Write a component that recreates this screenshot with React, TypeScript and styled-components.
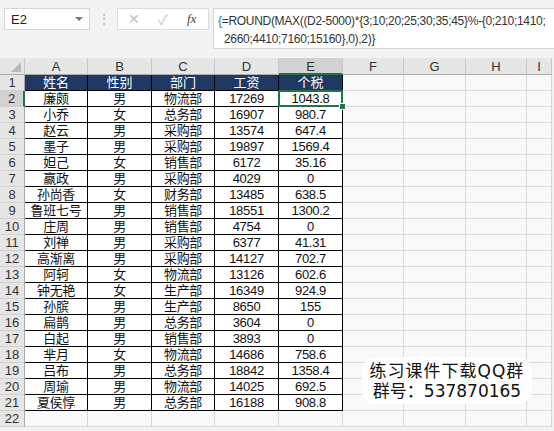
import styled, { createGlobalStyle } from "styled-components";

const GlobalStyle = createGlobalStyle`
  body {
    margin: 0;
    background: #f3f3f3;
  }
`;

const COLUMNS = ["A", "B", "C", "D", "E", "F", "G", "H", "I"];
const WIDTHS = [63, 64, 63, 64, 64, 61, 62, 61, 25];

const rows = [
  ["姓名", "性别", "部门", "工资", "个税"],
  ["廉颇", "男", "物流部", "17269", "1043.8"],
  ["小乔", "女", "总务部", "16907", "980.7"],
  ["赵云", "男", "采购部", "13574", "647.4"],
  ["墨子", "男", "采购部", "19897", "1569.4"],
  ["妲己", "女", "销售部", "6172", "35.16"],
  ["嬴政", "男", "采购部", "4029", "0"],
  ["孙尚香", "女", "财务部", "13485", "638.5"],
  ["鲁班七号", "男", "销售部", "18551", "1300.2"],
  ["庄周", "男", "销售部", "4754", "0"],
  ["刘禅", "男", "采购部", "6377", "41.31"],
  ["高渐离", "男", "采购部", "14127", "702.7"],
  ["阿轲", "女", "物流部", "13126", "602.6"],
  ["钟无艳", "女", "生产部", "16349", "924.9"],
  ["孙膑", "男", "生产部", "8650", "155"],
  ["扁鹊", "男", "总务部", "3604", "0"],
  ["白起", "男", "销售部", "3893", "0"],
  ["芈月", "女", "物流部", "14686", "758.6"],
  ["吕布", "男", "总务部", "18842", "1358.4"],
  ["周瑜", "男", "物流部", "14025", "692.5"],
  ["夏侯惇", "男", "总务部", "16188", "908.8"],
];

const TOTAL_ROWS = 22;

const App = () => {
  return (
    <Page>
      <GlobalStyle />
      <Toolbar>
        <NameBox>
          <span>E2</span>
          <Caret />
        </NameBox>
        <Grip>⋮</Grip>
        <ButtonGroup>
          <ToolButton>✕</ToolButton>
          <ToolButton>✓</ToolButton>
          <FxButton>fx</FxButton>
        </ButtonGroup>
        <FormulaBox>
          <FormulaLine>
            <Brace>{"{"}</Brace>=ROUND(MAX((D2-5000)*{"{"}3;10;20;25;30;35;45{"}"}%-{"{"}0;210;1410;
          </FormulaLine>
          <FormulaLine $indent>2660;4410;7160;15160{"}"},0),2){"}"}</FormulaLine>
        </FormulaBox>
      </Toolbar>

      <Sheet>
        <Corner>
          <CornerMark />
        </Corner>
        {COLUMNS.map((c) => (
          <ColHead key={c} $active={c === "E"}>
            {c}
          </ColHead>
        ))}

        {Array.from({ length: TOTAL_ROWS }, (_, r) => {
          const data = rows[r];
          return [
            <RowHead key={`h${r}`} $active={r === 1}>
              {r + 1}
            </RowHead>,
            ...COLUMNS.map((c, ci) => {
              const value = data && ci < 5 ? data[ci] : "";
              const inTable = !!data && ci < 5;
              return (
                <Cell
                  key={`${r}-${c}`}
                  $table={inTable}
                  $head={inTable && r === 0}
                  $selected={r === 1 && c === "E"}
                >
                  {value}
                </Cell>
              );
            }),
          ];
        })}
      </Sheet>

      <Watermark>
        <WatermarkLine>练习课件下载QQ群</WatermarkLine>
        <WatermarkLine $tight>群号：537870165</WatermarkLine>
      </Watermark>
    </Page>
  );
};

const Page = styled.div`
  position: relative;
  width: 554px;
  height: 431px;
  overflow: hidden;
  background: #f3f3f3;
  font-family: "Liberation Sans", "Noto Sans CJK SC", sans-serif;
`;

const Toolbar = styled.div`
  height: 58px;
  box-sizing: border-box;
  padding: 8px 0 0 4px;
  display: flex;
  align-items: flex-start;
`;

const NameBox = styled.div`
  width: 86px;
  height: 22px;
  box-sizing: border-box;
  background: #fff;
  border: 1px solid #d6d6d6;
  display: flex;
  align-items: center;
  justify-content: space-between;
  padding: 0 6px 0 6px;
  font-size: 13px;
  color: #222;
`;

const Caret = styled.span`
  width: 0;
  height: 0;
  border-left: 4px solid transparent;
  border-right: 4px solid transparent;
  border-top: 4px solid #777;
`;

const Grip = styled.div`
  width: 27px;
  height: 22px;
  line-height: 22px;
  text-align: center;
  color: #aaa;
  font-size: 12px;
`;

const ButtonGroup = styled.div`
  width: 92px;
  height: 22px;
  box-sizing: border-box;
  background: #fff;
  border: 1px solid #dcdcdc;
  display: flex;
  align-items: center;
  justify-content: space-around;
  padding: 0 2px;
`;

const ToolButton = styled.span`
  width: 26px;
  text-align: center;
  font-size: 14px;
  color: #c2c2c2;
`;

const FxButton = styled.span`
  width: 26px;
  text-align: center;
  font-family: "Liberation Serif", serif;
  font-style: italic;
  font-size: 13px;
  color: #444;
`;

const FormulaBox = styled.div`
  margin-left: 4px;
  flex: 1;
  height: 41px;
  box-sizing: border-box;
  background: #fff;
  border: 1px solid #d6d6d6;
  border-right: none;
  padding: 3px 0 0 4px;
  font-size: 12px;
  letter-spacing: -0.3px;
  color: #333;
`;

const FormulaLine = styled.div<{ $indent?: boolean }>`
  height: 18px;
  line-height: 18px;
  white-space: nowrap;
  padding-left: ${(p) => (p.$indent ? "6px" : "0")};
`;

const Brace = styled.span`
  color: #3a6fc4;
`;

const Sheet = styled.div`
  display: grid;
  grid-template-columns: 25px ${WIDTHS.map((w) => `${w}px`).join(" ")};
  grid-template-rows: 17px repeat(${TOTAL_ROWS}, 16px);
  font-size: 13px;
`;

const Corner = styled.div`
  position: relative;
  background: #e6e6e6;
  border-right: 1px solid #c8c8c8;
  border-bottom: 1px solid #ababab;
`;

const CornerMark = styled.div`
  position: absolute;
  right: 3px;
  bottom: 2px;
  width: 0;
  height: 0;
  border-left: 10px solid transparent;
  border-bottom: 10px solid #b9b9b9;
`;

const ColHead = styled.div<{ $active?: boolean }>`
  box-sizing: border-box;
  background: ${(p) => (p.$active ? "#d2d2d2" : "#e6e6e6")};
  border-right: 1px solid #c8c8c8;
  border-bottom: ${(p) => (p.$active ? "2px solid #217346" : "1px solid #ababab")};
  color: #333;
  font-size: 13px;
  line-height: 17px;
  text-align: center;
`;

const RowHead = styled.div<{ $active?: boolean }>`
  box-sizing: border-box;
  background: ${(p) => (p.$active ? "#d2d2d2" : "#e6e6e6")};
  border-right: ${(p) => (p.$active ? "2px solid #217346" : "1px solid #ababab")};
  border-bottom: 1px solid #d0d0d0;
  color: #333;
  font-size: 13px;
  line-height: 16px;
  text-align: center;
`;

const Cell = styled.div<{ $table?: boolean; $head?: boolean; $selected?: boolean }>`
  position: relative;
  box-sizing: border-box;
  background: ${(p) => (p.$head ? "#203864" : p.$table ? "#fff" : "#f9f9f9")};
  color: ${(p) => (p.$head ? "#fff" : "#111")};
  border-right: 1px solid ${(p) => (p.$table ? "#000" : "#d9d9d9")};
  border-bottom: 1px solid ${(p) => (p.$table ? "#000" : "#d9d9d9")};
  font-family: "Liberation Sans", "Noto Sans CJK SC", sans-serif;
  font-size: 13px;
  letter-spacing: ${(p) => (p.$head ? "0" : "-0.3px")};
  line-height: 15px;
  text-align: center;
  white-space: nowrap;
  overflow: visible;

  ${(p) =>
    p.$selected &&
    `
    &::after {
      content: "";
      position: absolute;
      left: -1px;
      top: -1px;
      right: -1px;
      bottom: -1px;
      border: 2px solid #217346;
    }
    &::before {
      content: "";
      position: absolute;
      right: -4px;
      bottom: -4px;
      width: 5px;
      height: 5px;
      background: #217346;
      border: 1px solid #fff;
      z-index: 2;
    }
  `}
`;

const Watermark = styled.div`
  position: absolute;
  left: 362px;
  top: 357px;
  width: 170px;
  height: 47px;
  box-sizing: border-box;
  background: #fff;
  border-radius: 14px;
  display: flex;
  flex-direction: column;
  align-items: center;
  justify-content: center;
  font-family: "DejaVu Sans", "Noto Sans CJK SC", sans-serif;
  font-size: 17px;
  color: #111;
`;

const WatermarkLine = styled.div<{ $tight?: boolean }>`
  line-height: 20px;
  letter-spacing: ${(p) => (p.$tight ? "0" : "1px")};
  white-space: nowrap;
`;

export default App;
